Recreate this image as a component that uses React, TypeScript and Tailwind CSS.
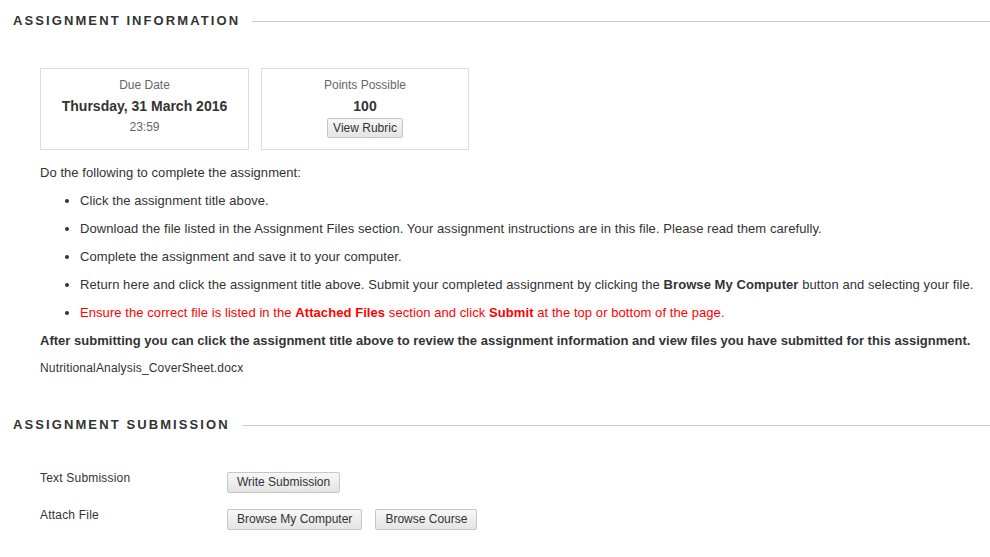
import React from 'react';

const font = { fontFamily: '"Liberation Sans", Arial, sans-serif' };

function SectionHeading({ title }: { title: string }) {
  return (
    <div className="flex h-[40px] items-center pl-[13px] pt-[1px]">
      <h2 className="shrink-0 text-[13px] font-bold uppercase tracking-[2.1px] text-[#333]">{title}</h2>
      <div className="ml-[12px] mt-[1px] h-px flex-1 bg-[#cccccc]" />
    </div>
  );
}

function Btn({ children, small }: { children: React.ReactNode; small?: boolean }) {
  return (
    <button
      className={
        small
          ? 'h-[20px] rounded-[2px] border border-[#c6c6c6] bg-gradient-to-b from-[#f7f7f7] to-[#e4e4e4] px-[5px] text-[12px] leading-[18px] text-[#333]'
          : 'h-[21px] rounded-[2px] border border-[#c6c6c6] bg-gradient-to-b from-[#f7f7f7] to-[#e4e4e4] px-[9px] text-[12px] leading-[19px] text-[#333]'
      }
    >
      {children}
    </button>
  );
}

export default function App() {
  return (
    <div style={font} className="w-[990px] bg-white text-[13px] text-[#333]">
      <SectionHeading title="Assignment Information" />

      <div className="pl-[40px]">
        <div className="mt-[28px] flex gap-[12px]">
          <div className="flex h-[82px] w-[209px] flex-col items-center border border-[#dddddd] pt-[8px]">
            <div className="text-[12px] leading-[16px] text-[#666]">Due Date</div>
            <div className="mt-[4px] text-[14px] font-bold leading-[19px] text-[#333]">Thursday, 31 March 2016</div>
            <div className="mt-[3px] text-[12px] leading-[16px] text-[#666]">23:59</div>
          </div>
          <div className="flex h-[82px] w-[208px] flex-col items-center border border-[#dddddd] pt-[8px]">
            <div className="text-[12px] leading-[16px] text-[#666]">Points Possible</div>
            <div className="mt-[4px] text-[14px] font-bold leading-[19px] text-[#333]">100</div>
            <div className="mt-[2px]">
              <Btn small>View Rubric</Btn>
            </div>
          </div>
        </div>

        <p className="mt-[13px] leading-[20px] tracking-[0.05px]">Do the following to complete the assignment:</p>
        <ul className="list-disc pl-[40px] leading-[20px] tracking-[0.07px] marker:text-[#333]">
          <li className="mt-[8px]">Click the assignment title above.</li>
          <li className="mt-[8px]">
            Download the file listed in the Assignment Files section. Your assignment instructions are in this file. Please read them carefully.
          </li>
          <li className="mt-[8px]">Complete the assignment and save it to your computer.</li>
          <li className="mt-[8px]">
            Return here and click the assignment title above. Submit your completed assignment by clicking the <b>Browse My Computer</b> button and selecting your file.
          </li>
          <li className="mt-[8px] text-[#ff0000] marker:text-[#333]">
            Ensure the correct file is listed in the <b>Attached Files</b> section and click <b>Submit</b> at the top or bottom of the page.
          </li>
        </ul>
        <p className="mt-[8px] font-bold leading-[20px] tracking-[0.02px]">
          After submitting you can click the assignment title above to review the assignment information and view files you have submitted for this assignment.
        </p>
        <p className="mt-[7px] text-[12px] leading-[20px] tracking-[0.17px]">NutritionalAnalysis_CoverSheet.docx</p>
      </div>

      <div className="mt-[26px]">
        <SectionHeading title="Assignment Submission" />
      </div>

      <div className="pb-[20px] pl-[40px]">
        <div className="mt-[26px] flex items-start">
          <div className="w-[187px] text-[12px] leading-[16px] tracking-[0.2px]">Text Submission</div>
          <div className="mt-[2px]">
            <Btn>Write Submission</Btn>
          </div>
        </div>
        <div className="mt-[14px] flex items-start">
          <div className="w-[187px] text-[12px] leading-[16px] tracking-[0.2px]">Attach File</div>
          <div className="mt-[2px] flex gap-[13px]">
            <Btn>Browse My Computer</Btn>
            <Btn>Browse Course</Btn>
          </div>
        </div>
      </div>
    </div>
  );
}
